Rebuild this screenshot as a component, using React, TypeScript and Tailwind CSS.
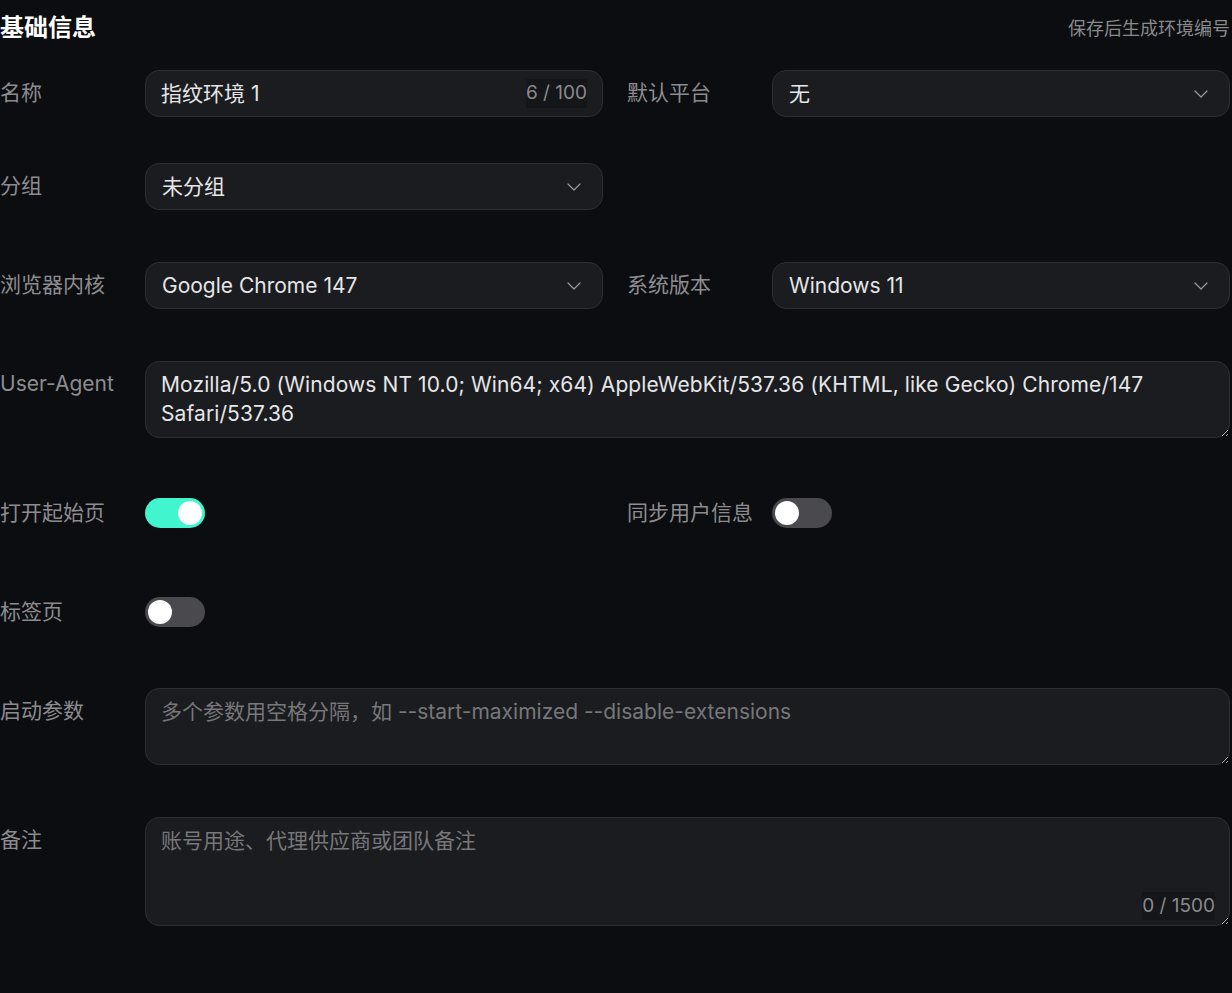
import { ChevronDown } from "lucide-react";
import { useState } from "react";

const font = "font-['Inter','Noto_Sans_CJK_SC',sans-serif]";

function Label({ children }: { children: React.ReactNode }) {
  return <div className="flex h-[46px] w-[145px] shrink-0 items-center text-[21px] text-[#8c8c8f]">{children}</div>;
}

function Select({ value }: { value: string }) {
  return (
    <div className="flex h-[47px] flex-1 items-center justify-between rounded-[14px] border border-[#2d2e32] bg-[#1b1c1f] pl-[16px] pr-[16px] text-[21px] text-[#e6e6e8]">
      <span>{value}</span>
      <ChevronDown className="size-[24px] text-[#9a9a9d]" strokeWidth={1.2} />
    </div>
  );
}

function Switch({ on, onToggle }: { on: boolean; onToggle: () => void }) {
  return (
    <button type="button" onClick={onToggle} className={`flex h-[30px] w-[60px] items-center rounded-full px-[3px] ${on ? "justify-end bg-[#41f5cf]" : "justify-start bg-[#4a4a4e]"}`}>
      <span className="block size-[24px] rounded-full bg-white" />
    </button>
  );
}

export default function App() {
  const [startPage, setStartPage] = useState(true);
  const [syncUser, setSyncUser] = useState(false);
  const [tabs, setTabs] = useState(false);

  return (
    <div className={`min-h-[993px] w-full bg-[#0c0d10] [color-scheme:dark] ${font}`}>
      <div className="w-[1230px]">
        <div className="flex h-[56px] items-center justify-between">
          <h2 className="text-[24px] font-bold text-white">基础信息</h2>
          <span className="text-[18px] text-[#8a8a8d]">保存后生成环境编号</span>
        </div>

        <div className="mt-[14px] grid grid-cols-2 gap-x-6">
          <div className="flex">
            <Label>名称</Label>
            <div className="flex h-[47px] flex-1 items-center justify-between rounded-[14px] border border-[#2d2e32] bg-[#1b1c1f] px-[15px] text-[21px] text-[#e6e6e8]">
              <span>指纹环境 1</span>
              <span className="bg-[#151619] text-[19px] text-[#8a8a8d]">6 / 100</span>
            </div>
          </div>
          <div className="flex">
            <Label>默认平台</Label>
            <Select value="无" />
          </div>
        </div>

        <div className="mt-[46px] grid grid-cols-2 gap-x-6">
          <div className="flex">
            <Label>分组</Label>
            <Select value="未分组" />
          </div>
        </div>

        <div className="mt-[52px] grid grid-cols-2 gap-x-6">
          <div className="flex">
            <Label>浏览器内核</Label>
            <Select value="Google Chrome 147" />
          </div>
          <div className="flex">
            <Label>系统版本</Label>
            <Select value="Windows 11" />
          </div>
        </div>

        <div className="mt-[52px] flex">
          <Label>User-Agent</Label>
          <textarea
            readOnly
            defaultValue="Mozilla/5.0 (Windows NT 10.0; Win64; x64) AppleWebKit/537.36 (KHTML, like Gecko) Chrome/147 Safari/537.36"
            className="h-[77px] flex-1 resize-y rounded-[14px] border border-[#2d2e32] bg-[#1b1c1f] px-[15px] pt-[8px] text-[21px] leading-[29px] tracking-[0.1px] text-[#e6e6e8] outline-none"
          />
        </div>

        <div className="mt-[52px] grid grid-cols-2 gap-x-6">
          <div className="flex items-center">
            <Label>打开起始页</Label>
            <Switch on={startPage} onToggle={() => setStartPage(!startPage)} />
          </div>
          <div className="flex items-center">
            <Label>同步用户信息</Label>
            <Switch on={syncUser} onToggle={() => setSyncUser(!syncUser)} />
          </div>
        </div>

        <div className="mt-[53px] flex items-center">
          <Label>标签页</Label>
          <Switch on={tabs} onToggle={() => setTabs(!tabs)} />
        </div>

        <div className="mt-[53px] flex">
          <Label>启动参数</Label>
          <textarea
            placeholder="多个参数用空格分隔，如 --start-maximized --disable-extensions"
            className="h-[77px] flex-1 resize-y rounded-[14px] border border-[#2d2e32] bg-[#1b1c1f] px-[15px] pt-[8px] text-[21px] leading-[29px] text-[#e6e6e8] outline-none placeholder:text-[#77777a]"
          />
        </div>

        <div className="mt-[52px] flex">
          <Label>备注</Label>
          <div className="relative flex-1">
            <textarea
              placeholder="账号用途、代理供应商或团队备注"
              className="block h-[109px] w-full resize-y rounded-[14px] border border-[#2d2e32] bg-[#1b1c1f] px-[15px] pt-[8px] text-[21px] leading-[29px] text-[#e6e6e8] outline-none placeholder:text-[#77777a]"
            />
            <span className="absolute bottom-[6px] right-[15px] bg-[#151619] text-[19px] text-[#8a8a8d]">0 / 1500</span>
          </div>
        </div>
      </div>
    </div>
  );
}
